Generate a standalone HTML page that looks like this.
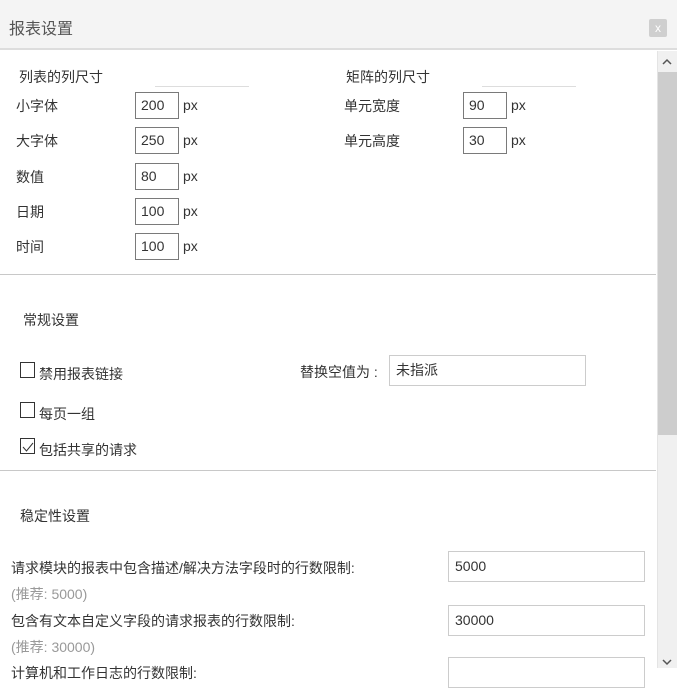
<!DOCTYPE html>
<html><head><meta charset="utf-8"><style>
*{margin:0;padding:0;box-sizing:border-box}
body{width:677px;height:668px;overflow:hidden;background:#fff;font-family:"Liberation Sans","Noto Sans CJK SC",sans-serif;font-size:14px;color:#333;position:relative}
.a{position:absolute;white-space:nowrap}
.in{position:absolute;border:1px solid #7a7a7a;height:27px;padding-left:5px;line-height:25px;font-size:14px;background:#fff}
.in2{position:absolute;border:1px solid #ccc;height:31px;padding-left:6px;line-height:29px;background:#fff}
.cb{position:absolute;width:15px;height:16px;border:1px solid #333;background:#fff}
.hr{position:absolute;left:0;width:656px;height:1px;background:#c8c8c8}
.g{color:#999}
</style></head><body>
<div class="a" style="left:0;top:0;width:677px;height:50px;background:#f4f4f4;border-bottom:2px solid #ddd"></div>
<div class="a" style="left:9px;top:15px;font-size:16px;color:#555">报表设置</div>
<div class="a" style="left:649px;top:19px;width:18px;height:18px;background:#cfcfcf;border-radius:2px;color:#fff;font-size:12px;text-align:center;line-height:18px">x</div>
<div class="a" style="left:657px;top:51px;width:20px;height:617px;background:#f0f0f0;border-left:1px solid #e4e4e4"></div>
<div class="a" style="left:658px;top:72px;width:19px;height:363px;background:#cdcdcd"></div>
<svg class="a" style="left:661px;top:57px" width="12" height="10"><path d="M2 7 L6 3 L10 7" stroke="#555" stroke-width="1.5" fill="none"/></svg>
<svg class="a" style="left:661px;top:657px" width="12" height="10"><path d="M2 3 L6 7 L10 3" stroke="#555" stroke-width="1.5" fill="none"/></svg>

<div class="a" style="left:19px;top:67px">列表的列尺寸</div>
<div class="a" style="left:155px;top:86px;width:94px;height:1px;background:#ddd"></div>
<div class="a" style="left:346px;top:67px">矩阵的列尺寸</div>
<div class="a" style="left:482px;top:86px;width:94px;height:1px;background:#ddd"></div>

<div class="a" style="left:16px;top:96px">小字体</div><div class="in" style="left:135px;top:92px;width:44px">200</div><div class="a" style="left:183px;top:97px">px</div>
<div class="a" style="left:16px;top:131px">大字体</div><div class="in" style="left:135px;top:127px;width:44px">250</div><div class="a" style="left:183px;top:132px">px</div>
<div class="a" style="left:16px;top:167px">数值</div><div class="in" style="left:135px;top:163px;width:44px">80</div><div class="a" style="left:183px;top:168px">px</div>
<div class="a" style="left:16px;top:202px">日期</div><div class="in" style="left:135px;top:198px;width:44px">100</div><div class="a" style="left:183px;top:203px">px</div>
<div class="a" style="left:16px;top:237px">时间</div><div class="in" style="left:135px;top:233px;width:44px">100</div><div class="a" style="left:183px;top:238px">px</div>

<div class="a" style="left:344px;top:96px">单元宽度</div><div class="in" style="left:463px;top:92px;width:44px">90</div><div class="a" style="left:511px;top:97px">px</div>
<div class="a" style="left:344px;top:131px">单元高度</div><div class="in" style="left:463px;top:127px;width:44px">30</div><div class="a" style="left:511px;top:132px">px</div>

<div class="hr" style="top:274px"></div>
<div class="a" style="left:23px;top:310px">常规设置</div>
<div class="cb" style="left:20px;top:362px"></div><div class="a" style="left:39px;top:364px">禁用报表链接</div>
<div class="a" style="left:300px;top:362px">替换空值为 :</div>
<div class="in2" style="left:389px;top:355px;width:197px">未指派</div>
<div class="cb" style="left:20px;top:402px"></div><div class="a" style="left:39px;top:404px">每页一组</div>
<div class="cb" style="left:20px;top:438px"></div>
<svg class="a" style="left:22px;top:441px" width="12" height="12"><path d="M1 6 L4.5 10 L11 2" stroke="#333" stroke-width="1" fill="none"/></svg>
<div class="a" style="left:39px;top:440px">包括共享的请求</div>
<div class="hr" style="top:470px"></div>
<div class="a" style="left:20px;top:506px">稳定性设置</div>

<div class="a" style="left:11px;top:558px">请求模块的报表中包含描述/解决方法字段时的行数限制:</div>
<div class="in2" style="left:448px;top:551px;width:197px">5000</div>
<div class="a g" style="left:11px;top:584px">(推荐: 5000)</div>
<div class="a" style="left:11px;top:611px">包含有文本自定义字段的请求报表的行数限制:</div>
<div class="in2" style="left:448px;top:605px;width:197px">30000</div>
<div class="a g" style="left:11px;top:637px">(推荐: 30000)</div>
<div class="a" style="left:11px;top:663px">计算机和工作日志的行数限制:</div>
<div class="in2" style="left:448px;top:657px;width:197px"></div>
</body></html>
